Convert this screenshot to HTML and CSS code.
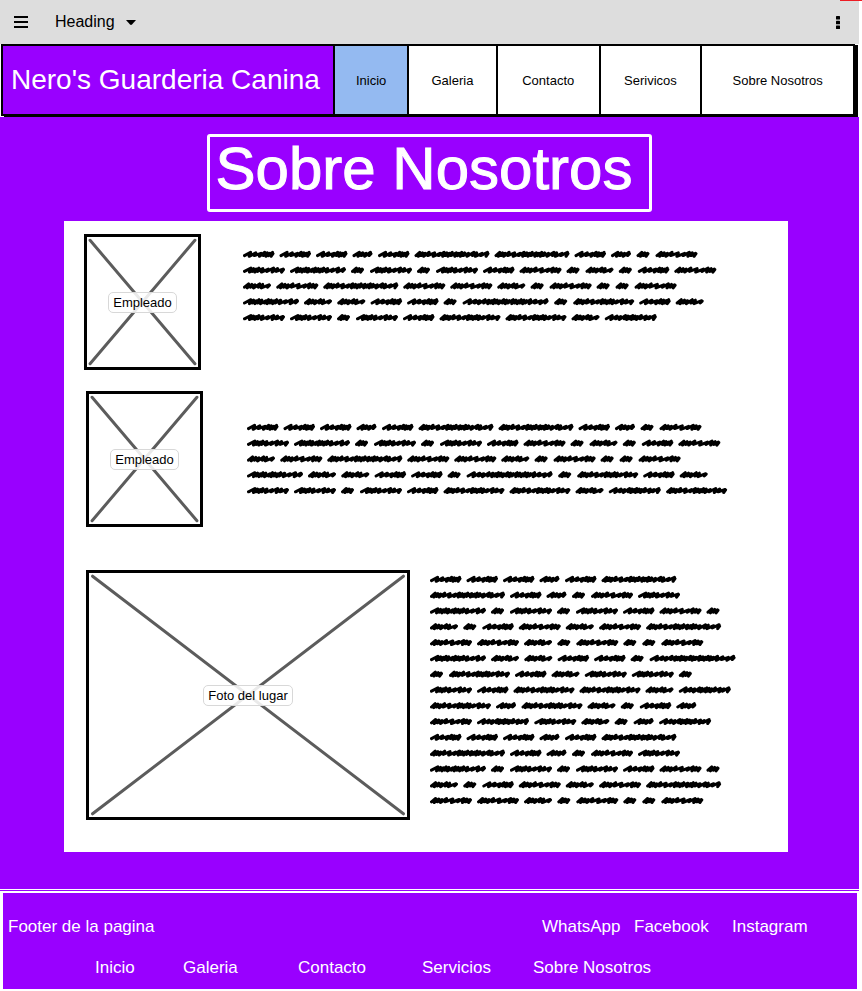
FILE: index.html
```
<!DOCTYPE html>
<html lang="es">
<head>
<meta charset="utf-8">
<meta name="viewport" content="width=device-width, initial-scale=1">
<title>Nero's Guarderia Canina</title>
<link rel="stylesheet" href="styles.css">
</head>
<body>
<div class="marker"></div>
<header class="toolbar">
  <button class="icon-button" type="button" aria-label="Menu">
    <svg width="14" height="12" viewBox="0 0 14 12"><path d="M0 1h14M0 6h14M0 11h14" stroke="#000" stroke-width="2"/></svg>
  </button>
  <button class="heading-button" type="button">Heading
    <svg width="10" height="5" viewBox="0 0 10 5"><path d="M0 0h10L6 4.6Q5 5.4 4 4.6Z"/></svg>
  </button>
  <button class="icon-button more" type="button" aria-label="Mas opciones">
    <svg width="4" height="13" viewBox="0 0 4 13"><rect width="4" height="3.6" rx="0.5"/><rect y="4.7" width="4" height="3.6" rx="0.5"/><rect y="9.4" width="4" height="3.6" rx="0.5"/></svg>
  </button>
</header>

<nav class="site-nav">
  <a class="brand" href="#">Nero's Guarderia Canina</a>
  <a class="tab active" href="#">Inicio</a>
  <a class="tab" href="#">Galeria</a>
  <a class="tab" href="#">Contacto</a>
  <a class="tab" href="#">Serivicos</a>
  <a class="tab" href="#">Sobre Nosotros</a>
</nav>

<main class="page">
  <h1 class="title">Sobre Nosotros</h1>
  <div class="panel">
    <section class="row lead">
      <figure class="photo">
        <svg class="cross" viewBox="0 0 100 100" preserveAspectRatio="none"><path d="M1 1L99 99M99 1L1 99"/></svg>
        <figcaption>Empleado</figcaption>
      </figure>
      <svg class="scribble" data-lines="AAABAGGABCD/NFCNCNADCECAD/EDGDDECDCCD/FEEAACJCHAE/NNCNAHHEK"></svg>
    </section>
    <section class="row middle">
      <figure class="photo">
        <svg class="cross" viewBox="0 0 100 100" preserveAspectRatio="none"><path d="M1 1L99 99M99 1L1 99"/></svg>
        <figcaption>Empleado</figcaption>
      </figure>
      <svg class="scribble" data-lines="AAABAGGABCD/NFCNCNADCECAD/EDGDDECDCCD/FEEAACJCHAE/NNCNAHHEKH"></svg>
    </section>
    <section class="row place">
      <figure class="photo wide">
        <svg class="cross" viewBox="0 0 100 100" preserveAspectRatio="none"><path d="M0.5 0.5L99.5 99.5M99.5 0.5L0.5 99.5"/></svg>
        <figcaption>Foto del lugar</figcaption>
      </figure>
      <svg class="scribble" data-lines="AAABAG/GABCDN/FCNCNADC/ECADEDG/DDECDCCD/FEEAACJ/CHAENNC/NAHHEK/HBHECAB/DKNECBK/AAABAG/GABCDN/FCNCNADC/ECADEDG/DDECDCCD"></svg>
    </section>
  </div>
</main>

<footer class="footer">
  <div class="footer-box">
    <div class="footer-top">
      <span>Footer de la pagina</span>
      <a href="#">WhatsApp</a>
      <a href="#">Facebook</a>
      <a href="#">Instagram</a>
    </div>
    <div class="footer-links">
      <a href="#">Inicio</a>
      <a href="#">Galeria</a>
      <a href="#">Contacto</a>
      <a href="#">Servicios</a>
      <a href="#">Sobre Nosotros</a>
    </div>
  </div>
</footer>
<script src="scribble.js"></script>
</body>
</html>
```
FILE: styles.css
```
* { box-sizing: border-box; }

body {
  margin: 0;
  padding-right: 3px;
  background: #fff;
  color: #000;
  font-family: "Liberation Sans", Arial, sans-serif;
  font-size: 13px;
}

a { color: inherit; text-decoration: none; }

button {
  padding: 0;
  border: 0;
  background: none;
  color: inherit;
  font: inherit;
}

svg { display: block; }

.marker {
  position: absolute;
  top: 0;
  right: 0;
  width: 22px;
  height: 1px;
  background: #ed1c24;
}

.toolbar {
  display: flex;
  align-items: center;
  height: 44px;
  padding: 0 19px 0 14px;
  background: #ddd;
}

.heading-button {
  display: flex;
  align-items: center;
  gap: 11px;
  margin-left: 27px;
  font-size: 16px;
}

.more { margin-left: auto; }

.site-nav {
  display: grid;
  grid-template-columns: 333fr 74fr 89fr 103fr 102fr 153fr;
  height: 72px;
  margin: 0 4px 1px 1px;
  border: 2px solid #000;
  border-left-width: 0;
  box-shadow: 3px 1px 0 #000;
}

.brand,
.tab {
  display: flex;
  align-items: center;
  justify-content: center;
  border-left: 2px solid #000;
}

.brand {
  justify-content: flex-start;
  padding-left: 8px;
  background: #9900ff;
  color: #fff;
  font-size: 28px;
}

.active { background: #94baf1; }

.page {
  padding: 17px 0 37px;
  background: #9900ff;
}

.title {
  width: fit-content;
  margin: 0 auto 9px;
  padding: 0 17px 9px 6px;
  border: 3px solid #fff;
  border-radius: 3px;
  color: #fff;
  font-size: 60px;
  font-weight: 400;
  line-height: 63px;
  -webkit-text-stroke: 1px #fff;
}

.panel {
  margin: 0 71px 0 64px;
  padding: 13px 20px 32px 22px;
  background: #fff;
}

.row {
  display: flex;
  align-items: flex-start;
  gap: 44px;
}

.lead {
  gap: 42px;
  margin-left: -2px;
}

.lead .scribble { margin-top: 13px; }

.middle {
  align-items: center;
  margin: 21px 0 43px;
}

.place { gap: 20px; }
.place .scribble { margin-top: 2px; }

.photo {
  display: grid;
  grid-template: 100% / 100%;
  flex: none;
  place-items: center;
  width: 117px;
  height: 136px;
  margin: 0;
  padding: 2px;
  border: 3px solid #000;
}

.wide { width: 324px; height: 250px; }

.cross,
.photo figcaption { grid-area: 1 / 1; }

.cross {
  width: 100%;
  height: 100%;
  overflow: visible;
  stroke: #5c5c5c;
  stroke-width: 3px;
  stroke-linecap: round;
}

.cross path { vector-effect: non-scaling-stroke; }

.photo figcaption {
  z-index: 1;
  padding: 1px 4px;
  border: 1px solid #d8d8d8;
  border-radius: 5px;
  background: rgba(255, 255, 255, 0.87);
  line-height: 17px;
  white-space: nowrap;
}

.scribble {
  flex: none;
  fill: none;
  stroke: #000;
  stroke-width: 3px;
  stroke-linecap: round;
  stroke-linejoin: round;
}

.footer {
  padding-top: 1px;
  border-top: 1px solid #fff;
  background: #9900ff;
}

.footer-box {
  padding: 24px 0 11px 5px;
  border: 2px solid #fff;
  border-left-width: 3px;
  color: #fff;
  font-size: 17px;
  line-height: 20px;
}

.footer-top {
  display: grid;
  grid-template-columns: 534fr 92fr 98fr 125fr;
}

.footer-links {
  display: grid;
  grid-template-columns: 88fr 115fr 124fr 111fr 324fr;
  margin-top: 21px;
  padding-left: 87px;
}
```
FILE: scribble.js
```
// Placeholder words: total advance, inked width, and the spacing of each pen stroke.
const words = {
  A: [36.5, 31.5, "4443222"],
  B: [25.5, 20, "4334"],
  C: [19, 13, "222"],
  D: [47, 42, "222344322"],
  E: [33.3, 28, "222324"],
  F: [61, 56, "42222322223444"],
  G: [80, 75, "2223443222322234244"],
  H: [66, 61, "222344322223434"],
  J: [91.6, 86, "4434322223223222223444"],
  K: [57.3, 52, "4434222223434"],
  N: [47, 42, "422234434"]
};
const PITCH = 15.8;

function wordPath(x, y, width, steps) {
  const total = [...steps].reduce((sum, s) => sum + Number(s), 0);
  const scale = (width - 4.5) / total;
  let cx = x + 1.5;
  let d = `M${cx} ${y + 1.6}`;
  [...steps].forEach((s, i) => {
    const step = Number(s) * scale;
    const top = y - 1.7 + (i % 3) * 0.5;
    const bottom = y + 2.3 - (i % 2) * 0.7;
    d += `L${(cx + step + 1).toFixed(1)} ${top.toFixed(1)}`;
    cx += step;
    d += `L${(cx - 0.4).toFixed(1)} ${bottom.toFixed(1)}`;
  });
  return d + `L${x + width - 1.5} ${y - 0.3}`;
}

document.querySelectorAll(".scribble").forEach((svg) => {
  const lines = svg.dataset.lines.split("/");
  let widest = 0;
  let d = "";
  lines.forEach((line, row) => {
    let x = 0;
    for (const key of line) {
      const [advance, width, steps] = words[key];
      d += wordPath(x, 7 + row * PITCH, width, steps);
      x += advance;
    }
    widest = Math.max(widest, x);
  });
  svg.setAttribute("width", Math.ceil(widest));
  svg.setAttribute("height", Math.ceil(lines.length * PITCH));
  const path = document.createElementNS("http://www.w3.org/2000/svg", "path");
  path.setAttribute("d", d);
  svg.append(path);
});
```
